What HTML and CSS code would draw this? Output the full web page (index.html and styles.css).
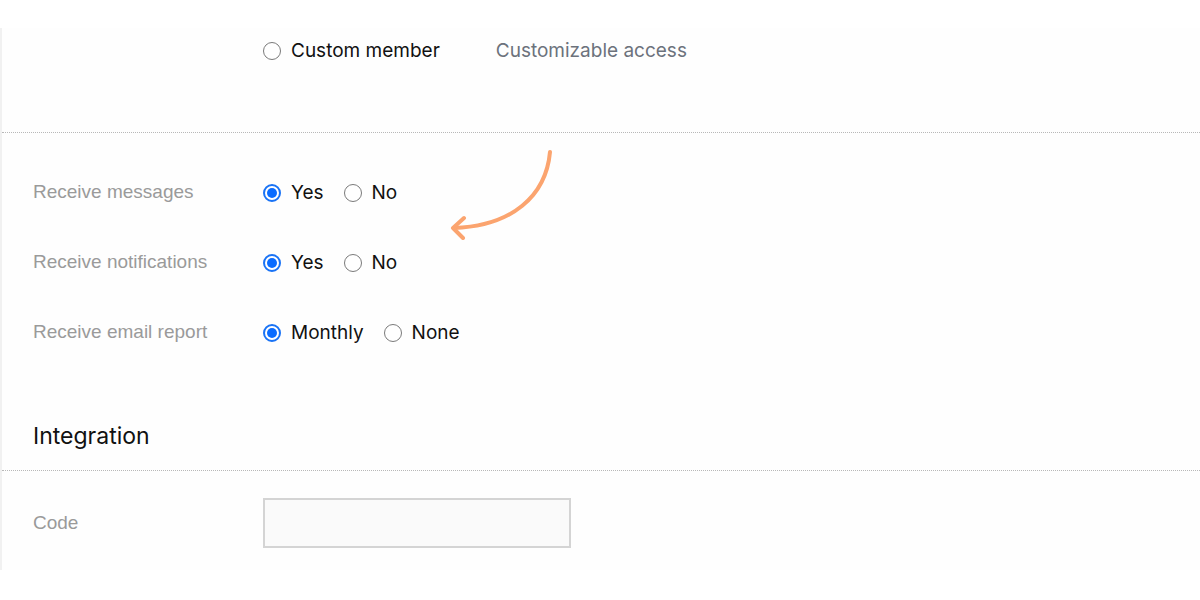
FILE: index.html
```html
<!DOCTYPE html>
<html lang="en">
<head>
    <meta charset="UTF-8">
    <meta name="viewport" content="width=device-width, initial-scale=1.0">
    <title>Member settings</title>
    <link rel="stylesheet" href="styles.css">
</head>
<body>
    <div class="panel">
        <div class="section-top">
            <div class="row">
                <div class="label"></div>
                <label class="option"><input type="radio" name="role">Custom member</label>
                <span class="hint">Customizable access</span>
            </div>
        </div>
        <div class="settings">
            <div class="row">
                <div class="label">Receive messages</div>
                <label class="option"><input type="radio" name="messages" checked>Yes</label>
                <label class="option"><input type="radio" name="messages">No</label>
            </div>
            <div class="row">
                <div class="label">Receive notifications</div>
                <label class="option"><input type="radio" name="notifications" checked>Yes</label>
                <label class="option"><input type="radio" name="notifications">No</label>
            </div>
            <div class="row">
                <div class="label">Receive email report</div>
                <label class="option"><input type="radio" name="report" checked>Monthly</label>
                <label class="option"><input type="radio" name="report">None</label>
            </div>
        </div>
        <h2 class="section-title">Integration</h2>
        <div class="integration">
            <div class="row">
                <div class="label">Code</div>
                <input type="text" class="code-input">
            </div>
        </div>
        <!-- annotation arrow -->
        <svg class="arrow" width="120" height="100" viewBox="440 140 120 100">
            <path d="M550 152 C 546 196, 512 226, 454 228" fill="none" stroke="#fba46f" stroke-width="4" stroke-linecap="round"/>
            <path d="M464 218 L453 228 L463 238" fill="none" stroke="#fba46f" stroke-width="4" stroke-linecap="round" stroke-linejoin="round"/>
        </svg>
    </div>
</body>
</html>
```

FILE: styles.css
```css
body {
    margin: 0;
    background-color: #ffffff;
    font-family: Inter, "Noto Sans", sans-serif;
    position: relative;
}
.panel {
    margin-top: 28px;
    height: 542px;
    border-left: 2px solid #f1f1f1;
    background-color: #fefefe;
    box-sizing: border-box;
}
.section-top {
    height: 105px;
    padding-top: 2px;
    box-sizing: border-box;
    border-bottom: 1px dotted #b8b8b8;
}
.row {
    display: flex;
    align-items: center;
    height: 40px;
    padding-left: 31px;
}
.label {
    width: 230px;
    flex-shrink: 0;
    font-family: "Liberation Sans", Arial, sans-serif;
    font-size: 19px;
    color: #9a9a9a;
}
.option {
    display: flex;
    align-items: center;
    font-size: 19px;
    color: #111;
    margin-right: 20px;
}
.option input {
    appearance: none;
    -webkit-appearance: none;
    width: 18px;
    height: 18px;
    margin: 0 10px 0 0;
    border: 1.5px solid #7a7a7a;
    border-radius: 50%;
    background: #fff;
    box-sizing: border-box;
    position: relative;
    top: 1px;
}
.option input:checked {
    border: 2px solid #1a73f5;
}
.option input:checked::after {
    content: "";
    position: absolute;
    left: 2px;
    top: 2px;
    width: 10px;
    height: 10px;
    border-radius: 50%;
    background: #0a6cff;
}
.hint {
    margin-left: 36px;
    font-size: 19px;
    color: #6c727c;
}
.settings {
    padding-top: 24px;
}
.settings .row {
    height: 70px;
}
.section-title {
    margin: 54px 0 0;
    padding: 0 0 19px 31px;
    height: 30px;
    line-height: 30px;
    font-size: 23px;
    font-weight: 400;
    color: #111;
    border-bottom: 1px dotted #b8b8b8;
}
.integration {
    padding-top: 27px;
}
.integration .row {
    height: 50px;
}
.code-input {
    width: 308px;
    height: 50px;
    box-sizing: border-box;
    border: 2px solid #d4d4d4;
    background: #fafafa;
    margin: 0;
}
.arrow {
    position: absolute;
    left: 440px;
    top: 140px;
}
```
